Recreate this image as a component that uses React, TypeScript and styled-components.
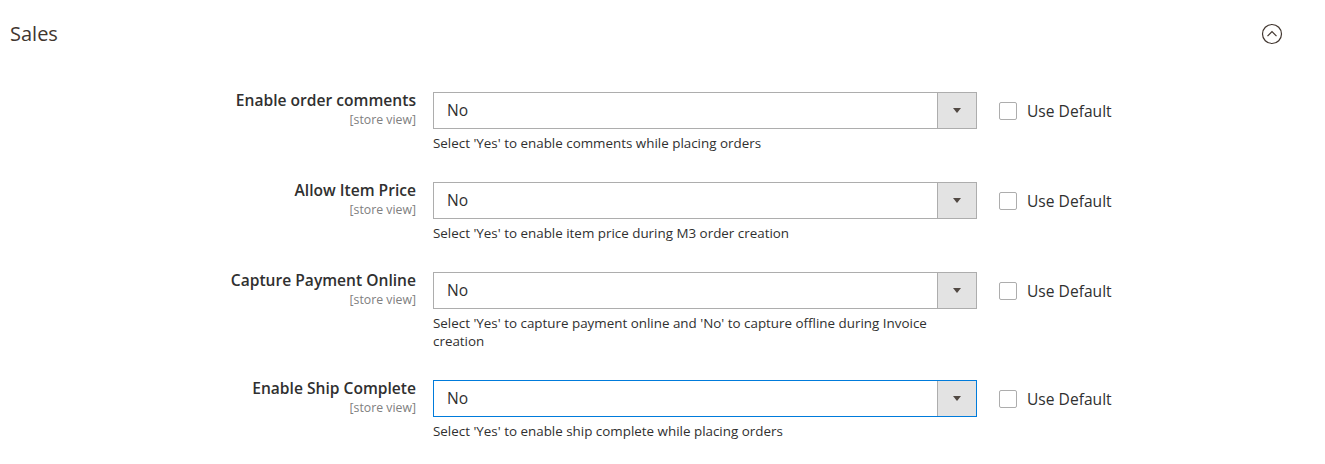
import React, { FC } from "react";
import styled, { createGlobalStyle } from "styled-components";

const GlobalStyle = createGlobalStyle`
  body {
    margin: 0;
    background: #ffffff;
    font-family: "Open Sans", "Liberation Sans", sans-serif;
    color: #303030;
  }
`;

const Section = styled.section`
  width: 1325px;
  height: 464px;
  overflow: hidden;
`;

const SectionHeader = styled.div`
  display: flex;
  align-items: center;
  justify-content: space-between;
  padding: 20px 42px 0 10px;
  height: 28px;
`;

const Title = styled.h2`
  margin: 0;
  font-size: 20px;
  line-height: 28px;
  font-weight: 400;
  color: #41362f;
`;

const CollapseButton = styled.button`
  border: 0;
  background: none;
  padding: 0;
  width: 22px;
  height: 22px;
  display: flex;
  cursor: pointer;
`;

const Fields = styled.div`
  padding-top: 44px;
  display: flex;
  flex-direction: column;
`;

const Row = styled.div`
  display: grid;
  grid-template-columns: 416px 544px auto;
  column-gap: 17px;
  padding-bottom: 30px;
`;

const LabelCell = styled.div`
  text-align: right;
  margin-top: -2px;
`;

const LabelText = styled.label`
  display: block;
  font-size: 15.6px;
  line-height: 21px;
  font-weight: 600;
  color: #303030;
`;

const Scope = styled.span`
  display: block;
  font-size: 12.3px;
  line-height: 17px;
  color: #808080;
`;

const Control = styled.div`
  display: flex;
  flex-direction: column;
`;

const SelectBox = styled.div<{ $focused?: boolean }>`
  display: flex;
  height: 37px;
  box-sizing: border-box;
  border: 1px solid ${(p) => (p.$focused ? "#007bdb" : "#adadad")};
  background: #ffffff;
`;

const SelectValue = styled.div`
  flex: 1;
  padding-left: 13px;
  font-size: 15.6px;
  line-height: 35px;
  color: #303030;
`;

const SelectArrow = styled.div`
  width: 38px;
  background: #e3e3e3;
  border-left: 1px solid #adadad;
  display: flex;
  align-items: center;
  justify-content: center;
  &::after {
    content: "";
    border-left: 4.5px solid transparent;
    border-right: 4.5px solid transparent;
    border-top: 5px solid #514943;
  }
`;

const Note = styled.div`
  margin-top: 5px;
  font-size: 13.4px;
  line-height: 18px;
  color: #303030;
`;

const UseDefault = styled.label`
  display: flex;
  align-items: center;
  gap: 10px;
  height: 37px;
  padding-left: 5px;
  font-size: 15.6px;
  color: #303030;
`;

const Checkbox = styled.span`
  width: 16px;
  height: 16px;
  border: 1px solid #adadad;
  border-radius: 2px;
  background: #ffffff;
`;

type Field = { label: string; note: string; focused?: boolean };

const fields: Field[] = [
  { label: "Enable order comments", note: "Select 'Yes' to enable comments while placing orders" },
  { label: "Allow Item Price", note: "Select 'Yes' to enable item price during M3 order creation" },
  {
    label: "Capture Payment Online",
    note: "Select 'Yes' to capture payment online and 'No' to capture offline during Invoice creation",
  },
  { label: "Enable Ship Complete", note: "Select 'Yes' to enable ship complete while placing orders", focused: true },
];

const CollapseIcon: FC = () => (
  <svg width="22" height="22" viewBox="0 0 22 22">
    <circle cx="11" cy="11" r="9.5" fill="none" stroke="#41362f" strokeWidth="1.2" />
    <path d="M6.5 13.2 L11 8.7 L15.5 13.2" fill="none" stroke="#41362f" strokeWidth="1.2" />
  </svg>
);

export default function App() {
  return (
    <>
      <GlobalStyle />
      <Section>
        <SectionHeader>
          <Title>Sales</Title>
          <CollapseButton aria-label="Collapse">
            <CollapseIcon />
          </CollapseButton>
        </SectionHeader>
        <Fields>
          {fields.map((f) => (
            <Row key={f.label}>
              <LabelCell>
                <LabelText>{f.label}</LabelText>
                <Scope>[store view]</Scope>
              </LabelCell>
              <Control>
                <SelectBox $focused={f.focused}>
                  <SelectValue>No</SelectValue>
                  <SelectArrow />
                </SelectBox>
                <Note>{f.note}</Note>
              </Control>
              <UseDefault>
                <Checkbox />
                Use Default
              </UseDefault>
            </Row>
          ))}
        </Fields>
      </Section>
    </>
  );
}
